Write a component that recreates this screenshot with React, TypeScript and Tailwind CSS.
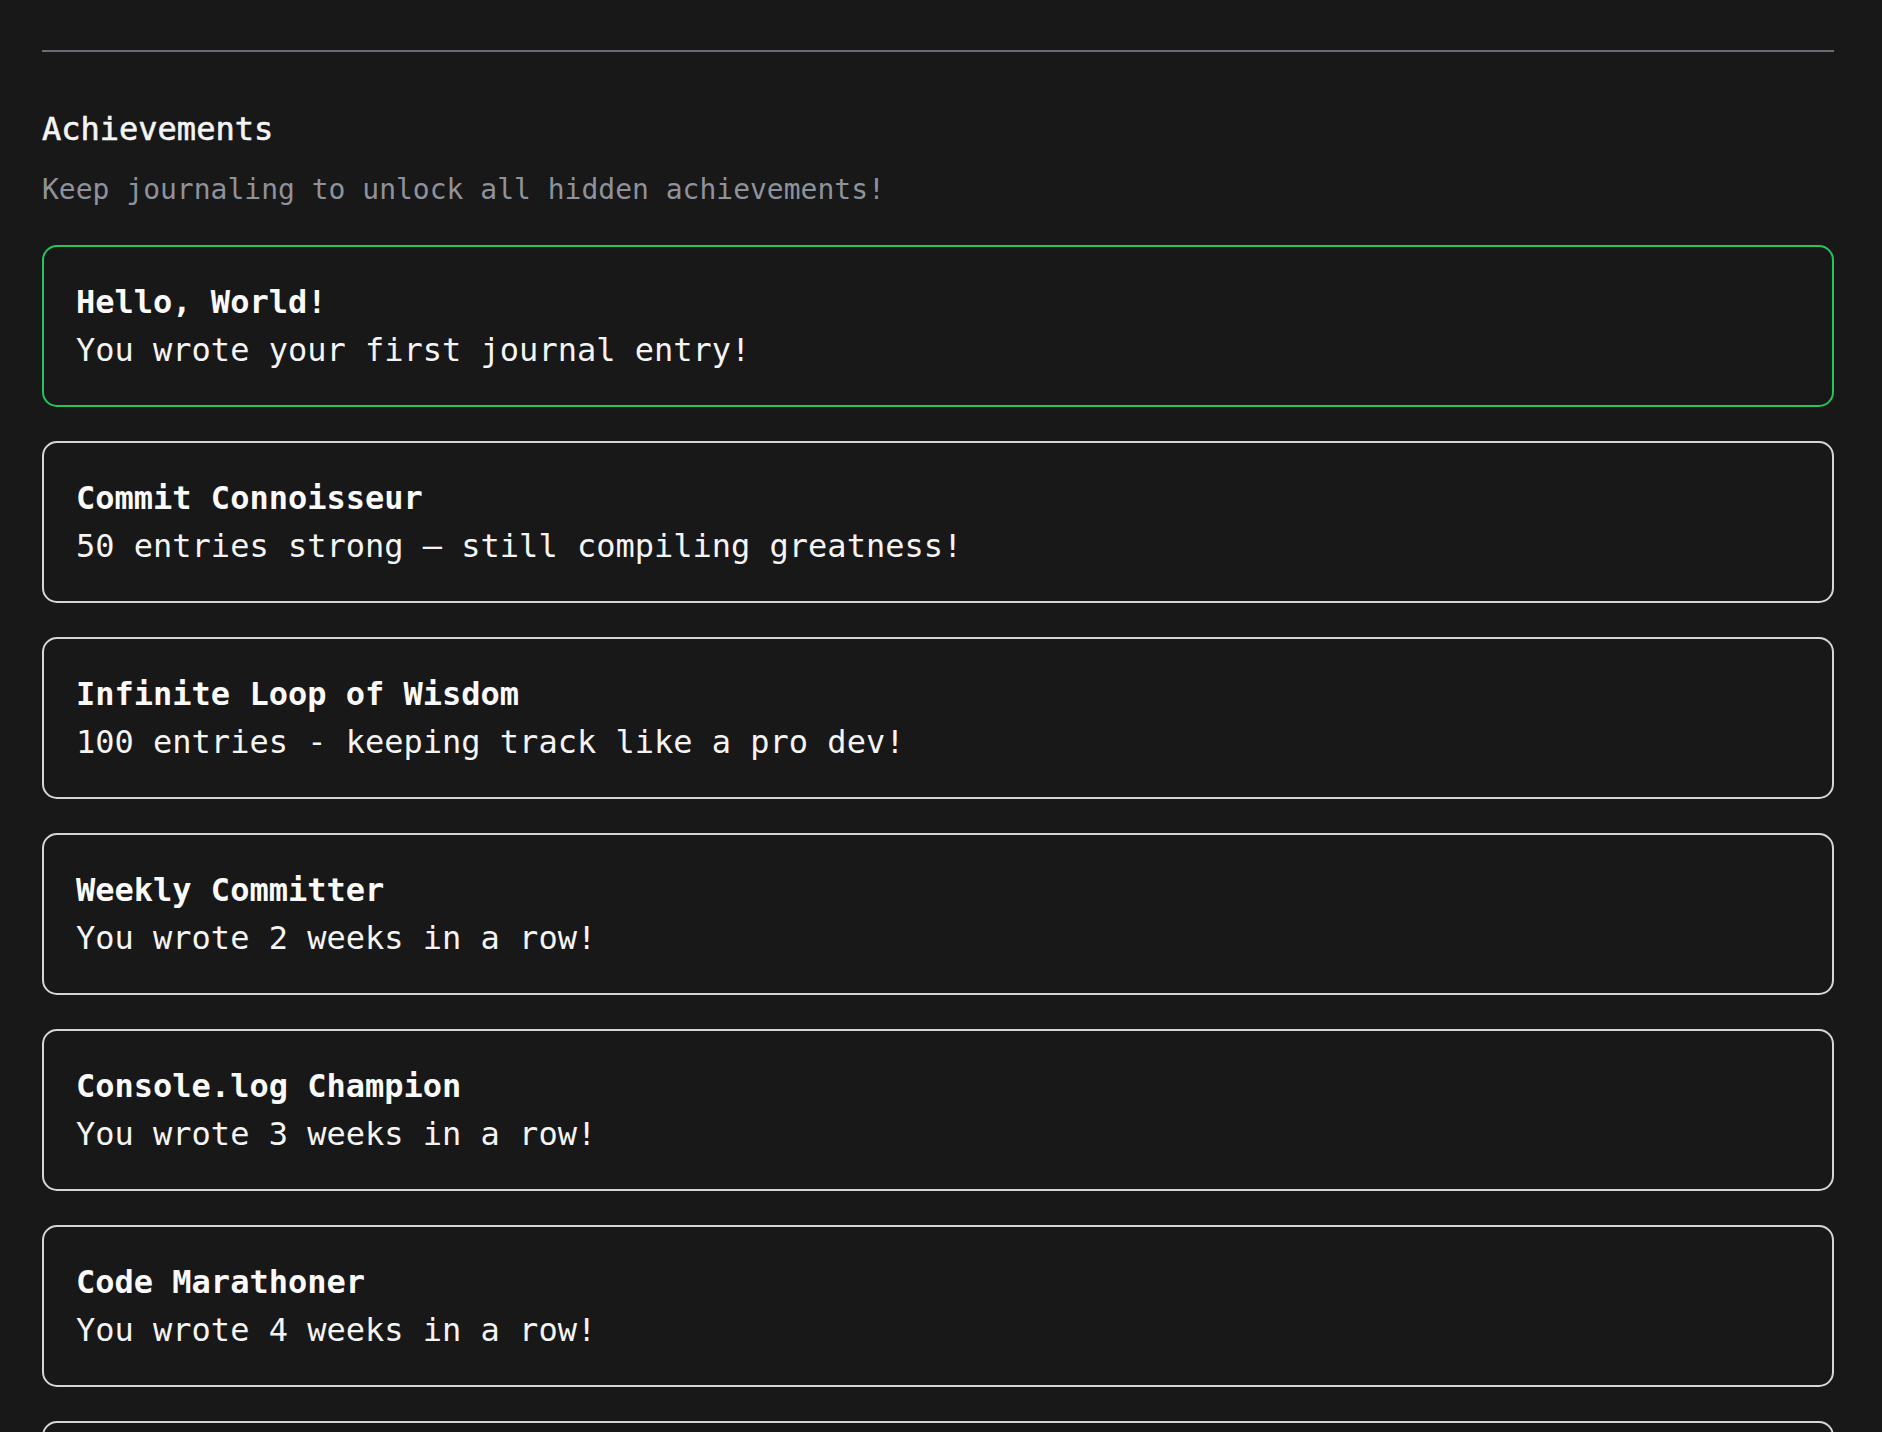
const achievements = [
  {
    title: "Hello, World!",
    description: "You wrote your first journal entry!",
    unlocked: true,
  },
  {
    title: "Commit Connoisseur",
    description: "50 entries strong — still compiling greatness!",
    unlocked: false,
  },
  {
    title: "Infinite Loop of Wisdom",
    description: "100 entries - keeping track like a pro dev!",
    unlocked: false,
  },
  {
    title: "Weekly Committer",
    description: "You wrote 2 weeks in a row!",
    unlocked: false,
  },
  {
    title: "Console.log Champion",
    description: "You wrote 3 weeks in a row!",
    unlocked: false,
  },
  {
    title: "Code Marathoner",
    description: "You wrote 4 weeks in a row!",
    unlocked: false,
  },
  {
    title: "Stack Overflow Survivor",
    description: "You wrote 5 weeks in a row!",
    unlocked: false,
  },
];

export default function App() {
  return (
    <div className="min-h-screen bg-[#181818] pt-[50px] pl-[42px] pr-[48px] pb-10 font-['DejaVu_Sans_Mono',monospace] text-[#f4f4f5]">
      {/* Divider */}
      <div className="h-[2px] bg-[#6c6c78]" />

      {/* Header */}
      <h2 className="mt-[53px] text-[32px] leading-[48px] font-normal text-[#f4f4f5] [-webkit-text-stroke:0.6px_#f4f4f5]">
        Achievements
      </h2>
      <p className="mt-[17px] text-[28px] leading-[40px] text-[#8e929c]">
        Keep journaling to unlock all hidden achievements!
      </p>

      {/* Achievement list */}
      <div className="mt-[35px] flex flex-col gap-[34px]">
        {achievements.map((a) => (
          <div
            key={a.title}
            className={`rounded-[15px] border-2 pl-[32px] pr-[31px] py-[31px] ${
              a.unlocked ? "border-[#22c55e]" : "border-[#d6d6da]"
            }`}
          >
            <h3 className="text-[32px] leading-[48px] font-bold text-[#fafafa]">
              {a.title}
            </h3>
            <p className="text-[32px] leading-[48px] text-[#f4f4f5]">
              {a.description}
            </p>
          </div>
        ))}
      </div>
    </div>
  );
}
